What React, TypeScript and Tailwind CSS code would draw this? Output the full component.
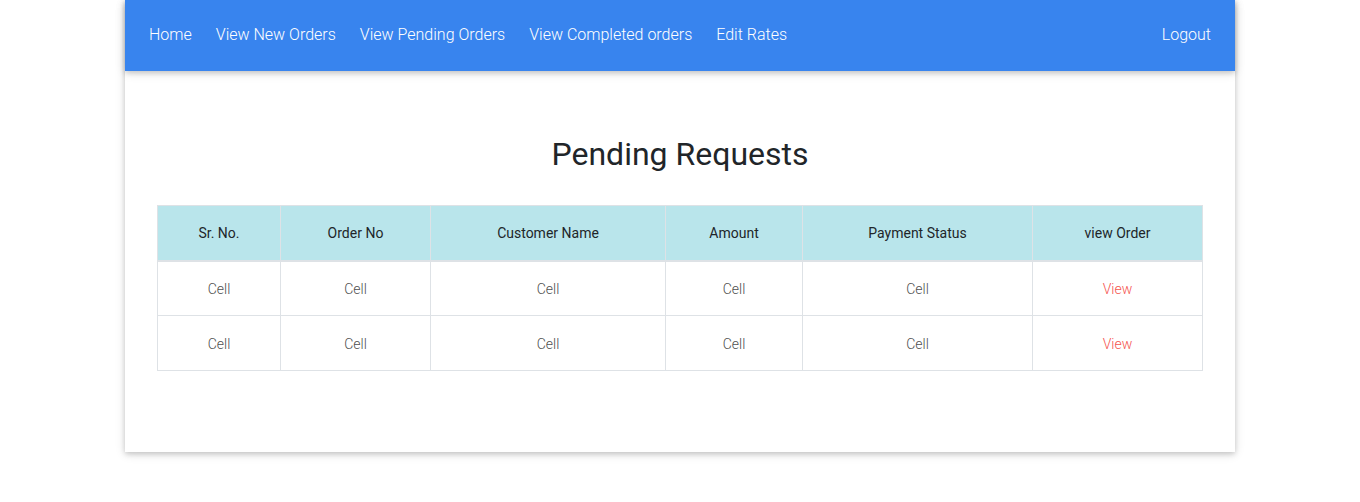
const links = ["Home", "View New Orders", "View Pending Orders", "View Completed orders", "Edit Rates"];
const cols = [
  { label: "Sr. No.", w: "w-[123px]" },
  { label: "Order No", w: "w-[150px]" },
  { label: "Customer Name", w: "w-[235px]" },
  { label: "Amount", w: "w-[137px]" },
  { label: "Payment Status", w: "w-[230px]" },
  { label: "view Order", w: "w-[170px]" },
];
const rows = [1, 2];

function Navbar() {
  return (
    <nav className="flex h-[71px] items-center justify-between bg-[#3884ee] px-6 pb-[2px] text-white shadow-[0_2px_5px_0_rgba(0,0,0,0.16),0_2px_10px_0_rgba(0,0,0,0.12)]">
      <ul className="flex gap-6">
        {links.map((l) => (
          <li key={l}>
            <a href="#" className="text-base font-light">
              {l}
            </a>
          </li>
        ))}
      </ul>
      <a href="#" className="text-base font-light">
        Logout
      </a>
    </nav>
  );
}

export default function App() {
  return (
    <div className="min-h-screen bg-white font-['Roboto',sans-serif]">
      <div className="mx-auto w-[1110px] bg-white shadow-[0_2px_5px_0_rgba(0,0,0,0.16),0_2px_10px_0_rgba(0,0,0,0.12)]">
        <Navbar />
        <main className="px-8 pt-16 pb-[81px]">
          <h2 className="mb-8 text-center text-[32px] leading-[38px] font-normal text-[#212529]">
            Pending Requests
          </h2>
          <table className="w-full table-fixed border-collapse border border-[#dee2e6] text-sm">
            <thead>
              <tr className="bg-[#b9e5eb]">
                {cols.map((c) => (
                  <th
                    key={c.label}
                    className={`${c.w} h-[55px] border border-b-2 border-[#dee2e6] text-center font-normal text-[#212529]`}
                  >
                    {c.label}
                  </th>
                ))}
              </tr>
            </thead>
            <tbody>
              {rows.map((r) => (
                <tr key={r}>
                  {cols.map((c, i) => (
                    <td
                      key={c.label}
                      className={`h-[55px] border border-[#dee2e6] pt-px text-center font-light ${
                        i === 5 ? "text-[#f5544f]" : "text-[#4f4f4f]"
                      }`}
                    >
                      {i === 5 ? <a href="#">View</a> : "Cell"}
                    </td>
                  ))}
                </tr>
              ))}
            </tbody>
          </table>
        </main>
      </div>
    </div>
  );
}
